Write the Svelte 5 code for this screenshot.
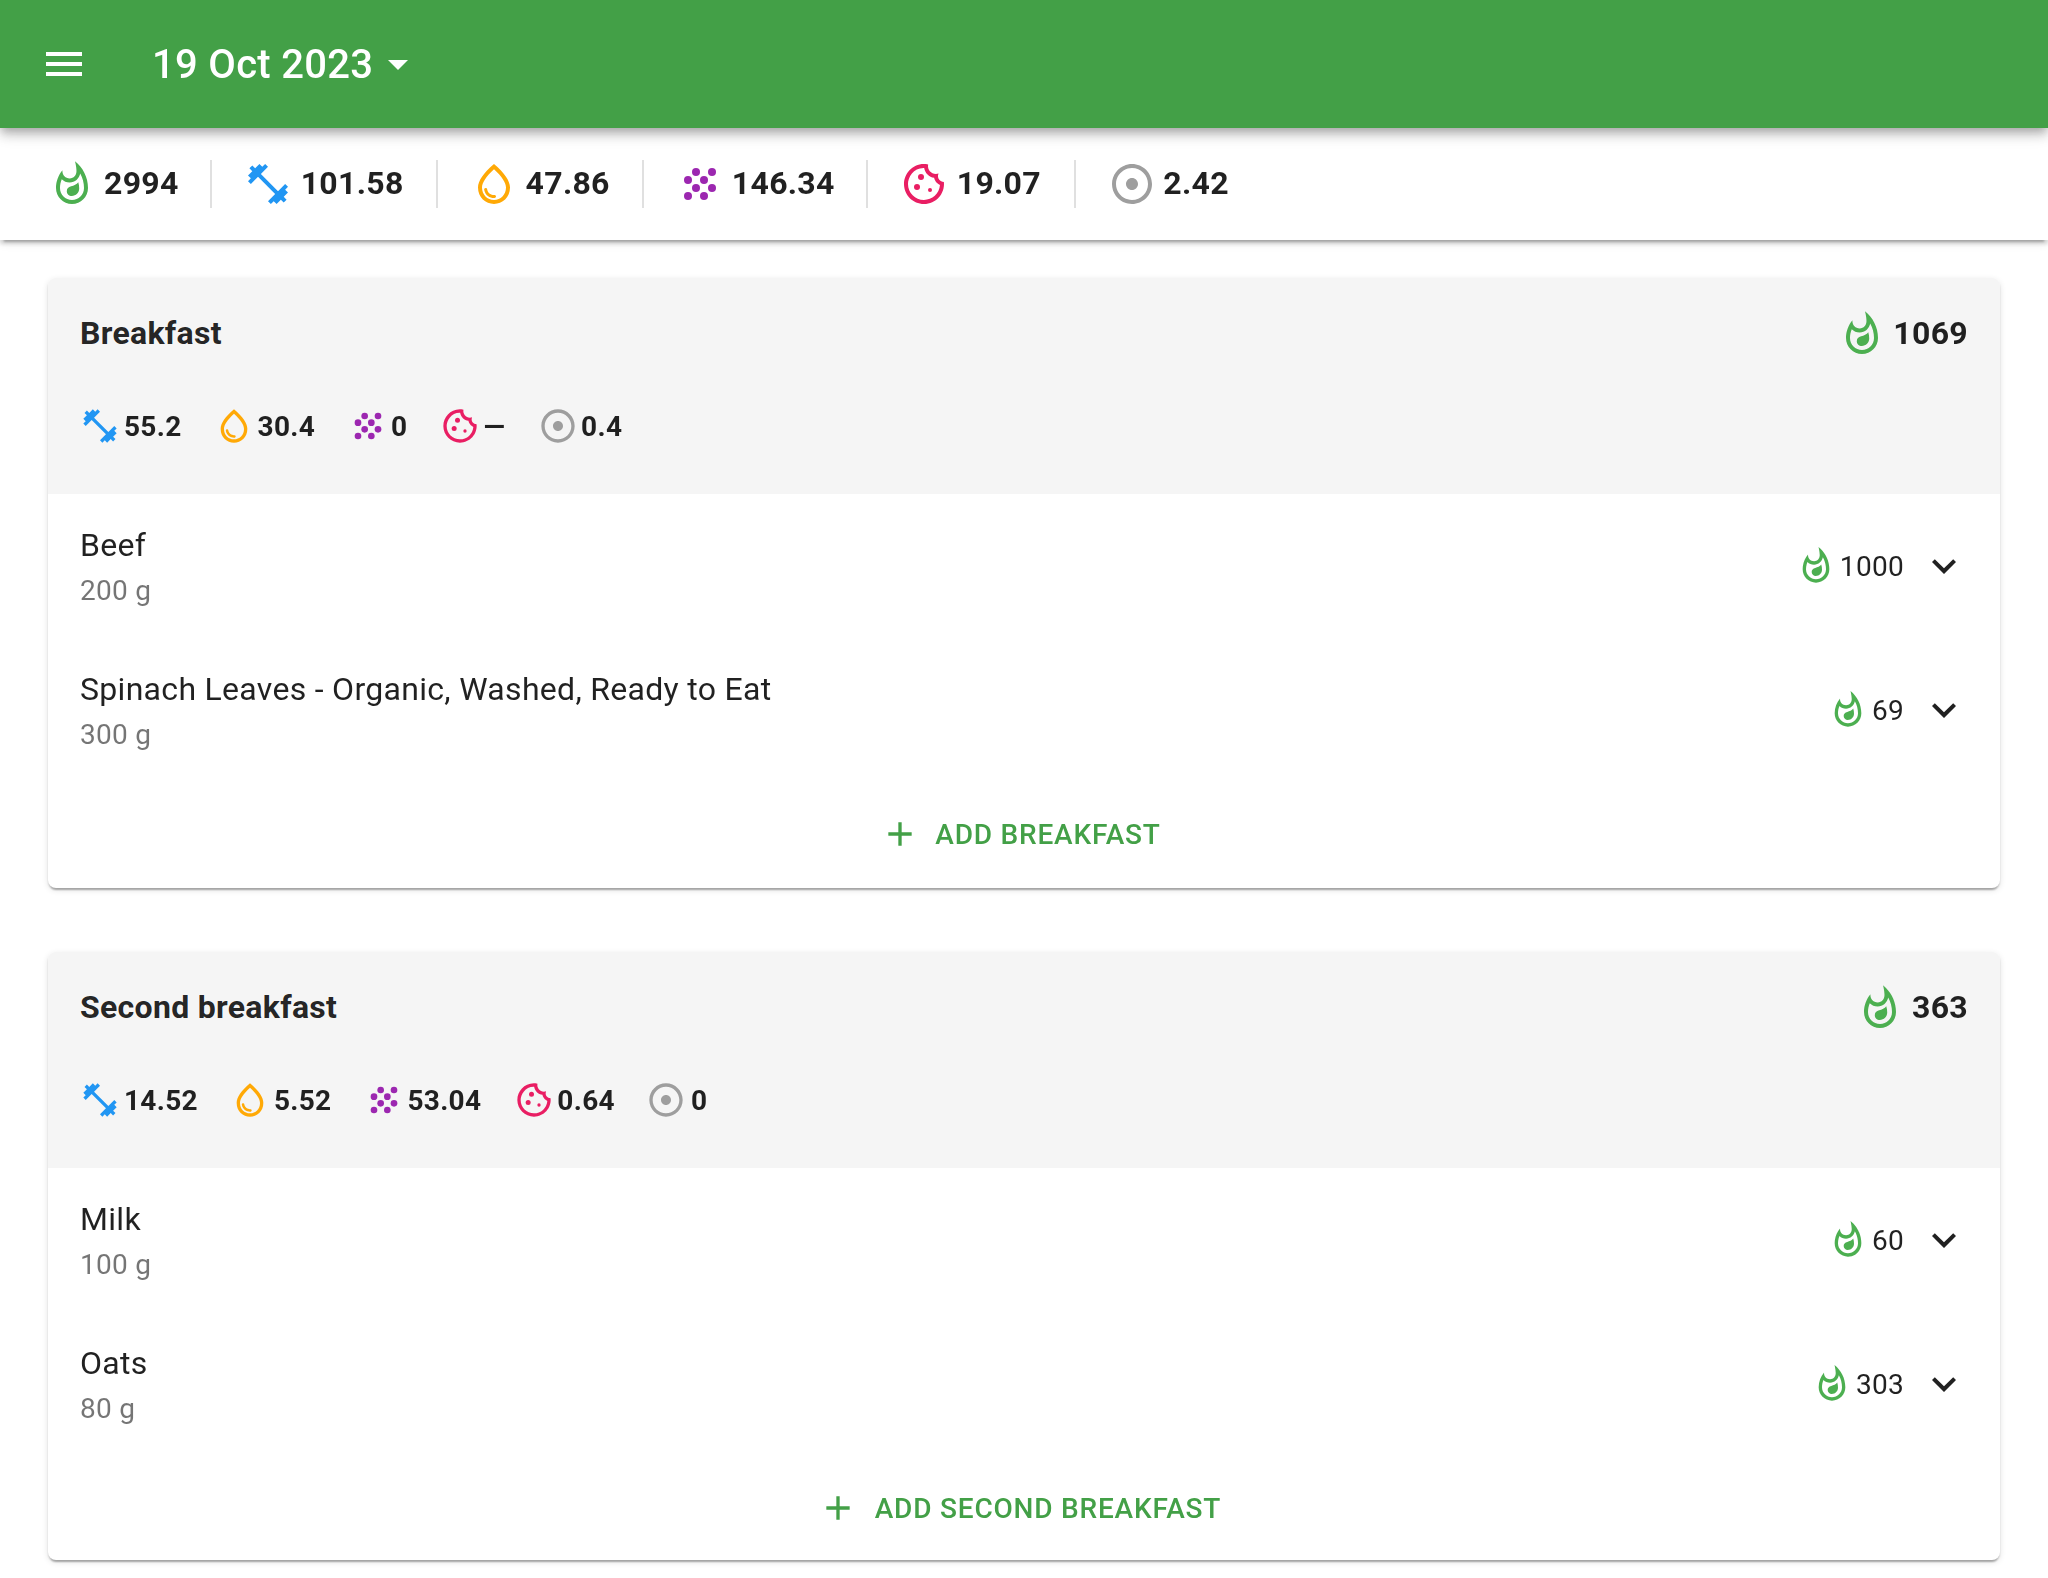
<script>
  const totals = [
    { icon: 'flame', value: '2994' },
    { icon: 'barbell', value: '101.58' },
    { icon: 'drop', value: '47.86' },
    { icon: 'grain', value: '146.34' },
    { icon: 'cookie', value: '19.07' },
    { icon: 'adjust', value: '2.42' }
  ];

  const meals = [
    {
      name: 'Breakfast',
      calories: '1069',
      macros: [
        { icon: 'barbell', value: '55.2' },
        { icon: 'drop', value: '30.4' },
        { icon: 'grain', value: '0' },
        { icon: 'cookie', value: '—' },
        { icon: 'adjust', value: '0.4' }
      ],
      foods: [
        { name: 'Beef', amount: '200 g', calories: '1000' },
        { name: 'Spinach Leaves - Organic, Washed, Ready to Eat', amount: '300 g', calories: '69' }
      ]
    },
    {
      name: 'Second breakfast',
      calories: '363',
      macros: [
        { icon: 'barbell', value: '14.52' },
        { icon: 'drop', value: '5.52' },
        { icon: 'grain', value: '53.04' },
        { icon: 'cookie', value: '0.64' },
        { icon: 'adjust', value: '0' }
      ],
      foods: [
        { name: 'Milk', amount: '100 g', calories: '60' },
        { name: 'Oats', amount: '80 g', calories: '303' }
      ]
    }
  ];

  const paths = {
    menu: 'M3 18h18v-2H3v2zm0-5h18v-2H3v2zm0-7v2h18V6H3z',
    dropdown: 'm7 10 5 5 5-5z',
    plus: 'M19 13h-6v6h-2v-6H5v-2h6V5h2v6h6v2z',
    chevron: 'M16.59 8.59 12 13.17 7.41 8.59 6 10l6 6 6-6z',
    flame:
      'M11.57 13.16c-1.36.28-2.17 1.16-2.17 2.41 0 1.34 1.11 2.42 2.49 2.42 2.05 0 3.71-1.66 3.71-3.71 0-1.07-.15-2.12-.46-3.12-.79 1.07-2.2 1.72-3.57 2zM13.5.67s.74 2.65.74 4.8c0 2.06-1.35 3.73-3.41 3.73-2.07 0-3.63-1.67-3.63-3.73l.03-.36C5.21 7.51 4 10.62 4 14c0 4.42 3.58 8 8 8s8-3.58 8-8C20 8.61 17.41 3.8 13.5.67zM12 20c-3.31 0-6-2.69-6-6 0-1.53.3-3.04.86-4.43 1.01 1.01 2.41 1.63 3.97 1.63 2.66 0 4.75-1.83 5.28-4.43C17.34 8.97 18 11.44 18 14c0 3.31-2.69 6-6 6z',
    barbell:
      'M20.57 14.86 22 13.43 20.57 12 17 15.57 8.43 7 12 3.43 10.57 2 9.14 3.43 7.71 2 5.57 4.14 4.14 2.71 2.71 4.14l1.43 1.43L2 7.71l1.43 1.43L2 10.57 3.43 12 7 8.43 15.57 17 12 20.57 13.43 22l1.43-1.43L16.29 22l2.14-2.14 1.43 1.43 1.43-1.43-1.43-1.43L22 16.29z',
    drop:
      'M12 2c-5.33 4.55-8 8.48-8 11.8 0 4.98 3.8 8.2 8 8.2s8-3.22 8-8.2c0-3.32-2.67-7.25-8-11.8zm0 18c-3.35 0-6-2.57-6-6.2 0-2.34 1.95-5.44 6-9.14 4.05 3.7 6 6.79 6 9.14 0 3.63-2.65 6.2-6 6.2zm-4.17-6c.37 0 .67.26.74.62.41 2.22 2.28 2.98 3.64 2.87.43-.02.79.32.79.75 0 .4-.32.73-.72.75-2.13.13-4.62-1.09-5.19-4.12-.08-.45.28-.87.74-.87z',
    cookie:
      'M21.95 10.99c-1.79-.03-3.7-1.95-2.68-4.22-2.97 1-5.78-1.59-5.19-4.56C7.11.74 2 6.41 2 12c0 5.52 4.48 10 10 10 5.89 0 10.54-5.08 9.95-11.01zM12 20c-4.41 0-8-3.59-8-8 0-3.31 2.73-8.18 8.08-8.02.42 2.54 2.44 4.56 4.99 4.94.07.36.52 2.55 2.92 3.63C19.7 16.86 16.06 20 12 20z',
    adjust:
      'M12 2C6.49 2 2 6.49 2 12s4.49 10 10 10 10-4.49 10-10S17.51 2 12 2zm0 18c-4.41 0-8-3.59-8-8s3.59-8 8-8 8 3.59 8 8-3.59 8-8 8zm3-8c0 1.66-1.34 3-3 3s-3-1.34-3-3 1.34-3 3-3 3 1.34 3 3z'
  };

  // Dots that are drawn as circles: [cx, cy, r]
  const dots = {
    grain: [
      [10, 6, 2], [18, 6, 2], [6, 10, 2], [14, 10, 2],
      [10, 14, 2], [18, 14, 2], [6, 18, 2], [14, 18, 2]
    ],
    cookie: [[10.5, 8.5, 1.5], [8.5, 13.5, 1.5], [15, 15, 1]]
  };
</script>

{#snippet icon(name, size)}
  <svg class="icon {size} {name}" viewBox="0 0 24 24" aria-hidden="true">
    {#if paths[name]}<path d={paths[name]} />{/if}
    {#each dots[name] ?? [] as [cx, cy, r]}
      <circle {cx} {cy} {r} />
    {/each}
  </svg>
{/snippet}

<div class="page">
  <header class="app-bar">
    <button class="menu-button" aria-label="Menu">{@render icon('menu', 'large')}</button>
    <button class="date">
      <span>19 Oct 2023</span>
      {@render icon('dropdown', 'large')}
    </button>
  </header>

  <section class="totals">
    {#each totals as total}
      <div class="total">
        {@render icon(total.icon, 'large')}
        <span>{total.value}</span>
      </div>
    {/each}
  </section>

  <main class="meals">
    {#each meals as meal}
      <article class="card">
        <div class="card-header">
          <div class="card-title">
            <h2>{meal.name}</h2>
            <div class="card-calories">
              {@render icon('flame', 'large')}
              <span>{meal.calories}</span>
            </div>
          </div>
          <div class="macros">
            {#each meal.macros as macro}
              <div class="macro">
                {@render icon(macro.icon, 'small')}
                <span>{macro.value}</span>
              </div>
            {/each}
          </div>
        </div>
        <ul class="foods">
          {#each meal.foods as food}
            <li class="food">
              <div class="food-text">
                <span class="food-name">{food.name}</span>
                <span class="food-amount">{food.amount}</span>
              </div>
              <div class="food-calories">
                {@render icon('flame', 'small')}
                <span>{food.calories}</span>
              </div>
              {@render icon('chevron', 'large')}
            </li>
          {/each}
        </ul>
        <div class="card-actions">
          <button class="add">
            {@render icon('plus', 'small')}
            <span>Add {meal.name}</span>
          </button>
        </div>
      </article>
    {/each}
  </main>
</div>

<style>
  :global(body) {
    margin: 0;
    background: #fff;
  }
  :global(#app) {
    height: 1578px;
    overflow: hidden;
  }

  /* Laid out at 1024px wide and shown at twice the size. */
  .page {
    width: 1024px;
    height: 789px;
    transform: scale(2);
    transform-origin: 0 0;
    font-family: Roboto, 'Liberation Sans', sans-serif;
    font-size: 16px;
    line-height: 1.5;
    letter-spacing: 0.00938em;
    color: rgba(0, 0, 0, 0.87);
  }

  button {
    padding: 0;
    border: 0;
    background: none;
    color: inherit;
    font: inherit;
    letter-spacing: inherit;
  }

  .icon {
    display: block;
    flex: none;
    fill: currentColor;
  }
  .large {
    width: 24px;
    height: 24px;
  }
  .small {
    width: 20px;
    height: 20px;
  }
  .flame { color: #4caf50; }
  .barbell { color: #2196f3; }
  .drop { color: #ffa906; }
  .grain { color: #9c27b0; }
  .cookie { color: #e91e63; }
  .adjust { color: #9e9e9e; }

  .app-bar {
    position: relative;
    z-index: 2;
    display: flex;
    align-items: center;
    gap: 32px;
    height: 64px;
    padding: 0 20px;
    box-sizing: border-box;
    background: #43a047;
    color: #fff;
    box-shadow:
      0 2px 4px -1px rgba(0, 0, 0, 0.2),
      0 4px 5px 0 rgba(0, 0, 0, 0.14),
      0 1px 10px 0 rgba(0, 0, 0, 0.12);
  }
  .date {
    display: flex;
    align-items: center;
    font-size: 20px;
    font-weight: 500;
    line-height: 1.6;
    letter-spacing: 0.0075em;
  }

  .totals {
    position: relative;
    z-index: 1;
    display: flex;
    padding: 16px 8px;
    background: #fff;
    font-weight: 700;
    box-shadow:
      0 3px 1px -2px rgba(0, 0, 0, 0.2),
      0 2px 2px 0 rgba(0, 0, 0, 0.14),
      0 1px 5px 0 rgba(0, 0, 0, 0.12);
  }
  .total {
    display: flex;
    align-items: center;
    gap: 4px;
    height: 24px;
    padding: 0 16px;
  }
  .total + .total {
    border-left: 1px solid rgba(0, 0, 0, 0.12);
  }
  .total:last-child {
    margin-left: 0.2px;
  }

  .meals {
    display: flex;
    flex-direction: column;
    gap: 32px;
    padding: 19px 24px 0;
  }
  .card {
    overflow: hidden;
    border-radius: 4px;
    background: #fff;
    box-shadow:
      0 2px 1px -1px rgba(0, 0, 0, 0.2),
      0 1px 1px 0 rgba(0, 0, 0, 0.14),
      0 1px 3px 0 rgba(0, 0, 0, 0.12);
  }
  .card-header {
    padding: 16px 16px 24px;
    background: #f5f5f5;
    font-weight: 700;
  }
  .card-title,
  .card-calories {
    display: flex;
    align-items: center;
  }
  .card-title {
    justify-content: space-between;
  }
  .card-calories {
    gap: 4px;
  }
  h2 {
    margin: 0;
    font-size: inherit;
    font-weight: inherit;
  }
  .macros {
    display: flex;
    gap: 16px;
    margin-top: 24px;
    font-size: 14px;
    line-height: 20px;
    letter-spacing: 0.01071em;
  }
  .macro,
  .food-calories {
    display: flex;
    align-items: center;
    gap: 2px;
  }

  .foods {
    margin: 0;
    padding: 0;
    list-style: none;
  }
  .food {
    display: flex;
    align-items: center;
    gap: 8px;
    height: 72px;
    padding: 0 16px;
  }
  .food-text {
    display: flex;
    flex: 1;
    flex-direction: column;
  }
  .food-amount,
  .food-calories {
    font-size: 14px;
    line-height: 20px;
    letter-spacing: 0.01071em;
  }
  .food-amount {
    color: rgba(0, 0, 0, 0.54);
  }

  .card-actions {
    display: flex;
    justify-content: center;
    padding: 8px;
  }
  .add {
    display: flex;
    align-items: center;
    gap: 8px;
    padding: 6px 8px 6px 4px;
    color: #43a047;
    font-size: 14px;
    font-weight: 500;
    line-height: 1.75;
    letter-spacing: 0.02857em;
    text-transform: uppercase;
  }
</style>
